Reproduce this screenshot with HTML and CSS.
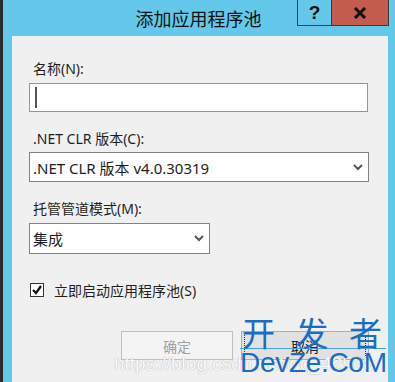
FILE: index.html
```html
<!DOCTYPE html>
<html lang="zh-CN">
<head>
    <meta charset="UTF-8">
    <title>添加应用程序池</title>
    <link rel="stylesheet" href="styles.css">
</head>
<body>
    <div class="window">
        <div class="titlebar">
            <div class="title">添加应用程序池</div>
            <div class="controls">
                <div class="ctl help">?</div>
                <div class="ctl close">
                    <svg width="14" height="12" viewBox="0 0 14 12"><path d="M2 1 L12 11 M12 1 L2 11" stroke="#111" stroke-width="3"/></svg>
                </div>
            </div>
        </div>
        <div class="client">
            <div class="label">名称(N):</div>
            <div class="textbox"><span class="caret"></span></div>

            <div class="label gap">.NET CLR 版本(C):</div>
            <div class="combo wide">
                <span>.NET CLR 版本 v4.0.30319</span>
                <svg class="chev" width="10" height="7" viewBox="0 0 10 7"><path d="M1 1 L5 5 L9 1" fill="none" stroke="#555" stroke-width="2"/></svg>
            </div>

            <div class="label gap">托管管道模式(M):</div>
            <div class="combo short">
                <span>集成</span>
                <svg class="chev" width="10" height="7" viewBox="0 0 10 7"><path d="M1 1 L5 5 L9 1" fill="none" stroke="#555" stroke-width="2"/></svg>
            </div>

            <div class="check-row">
                <div class="checkbox">
                    <svg width="12" height="12" viewBox="0 0 12 12"><path d="M2 6 L5 9 L10 2" fill="none" stroke="#111" stroke-width="2.2"/></svg>
                </div>
                <span>立即启动应用程序池(S)</span>
            </div>

            <div class="buttons">
                <div class="btn disabled">确定</div>
                <div class="btn cancel"><span class="focus">取消</span></div>
            </div>

            <div class="mark-csdn">https://blog.csdn.net/qq_42568</div>
            <div class="mark">
                <div class="mark-cn"><span>开</span><span>发</span><span>者</span></div>
                <div class="mark-en">DevZe.CoM</div>
            </div>
        </div>
    </div>
</body>
</html>
```

FILE: styles.css
```css
body {
    margin: 0;
    font-family: "Noto Sans", "Noto Sans CJK SC", sans-serif;
    color: #1e1e1e;
}

.window {
    width: 395px;
    height: 382px;
    box-sizing: border-box;
    background-color: #64c8ea;
    border-left: 3px solid #2b2b2b;
    padding: 0 7px 0 9px;
    display: flex;
    flex-direction: column;
    overflow: hidden;
}

.titlebar {
    height: 36px;
    display: grid;
    grid-template-columns: 1fr auto 1fr;
    margin-left: -3px;
}

.title {
    grid-column: 2;
    font-family: "Noto Sans CJK SC", sans-serif;
    font-size: 18px;
    line-height: 36px;
    color: #111;
}

.controls {
    grid-column: 3;
    justify-self: end;
    display: flex;
    height: 26px;
    margin-right: -1px;
}

.ctl {
    height: 25px;
    border: 1px solid #3a3a3a;
    border-top: none;
    display: flex;
    align-items: center;
    justify-content: center;
}

.help {
    width: 33px;
    border-right: none;
    font-family: "Liberation Sans", sans-serif;
    font-weight: bold;
    font-size: 19px;
    color: #111;
}

.close {
    width: 56px;
    background-color: #c45c4e;
}

.client {
    flex: 1;
    background-color: #f0f0f0;
    padding: 23px 0 0 17px;
    position: relative;
    font-size: 14px;
}

.label {
    padding-left: 4px;
    line-height: 20px;
    height: 20px;
}

.label.gap {
    margin-top: 17px;
}

.textbox {
    margin-top: 4px;
    width: 332px;
    height: 27px;
    background: #fff;
    border: 1px solid #7a9cc4;
    display: flex;
    align-items: center;
    padding-left: 5px;
}

.caret {
    width: 2px;
    height: 21px;
    background: #555;
}

.combo {
    margin-top: 3px;
    height: 28px;
    background: #fff;
    border: 1px solid #828282;
    display: flex;
    align-items: center;
    justify-content: space-between;
    padding: 0 5px 0 3px;
    font-size: 15px;
}

.combo.wide {
    width: 330px;
}

.combo.short {
    width: 171px;
    height: 29px;
    margin-top: 4px;
}

.check-row {
    margin-top: 27px;
    margin-left: 1px;
    height: 18px;
    display: flex;
    align-items: center;
    gap: 10px;
    font-size: 14px;
}

.checkbox {
    width: 12px;
    height: 12px;
    border: 1px solid #333;
    background: #fff;
    display: flex;
    align-items: center;
    justify-content: center;
}

.buttons {
    margin-top: 32px;
    margin-left: 92px;
    display: flex;
    gap: 8px;
}

.btn {
    width: 110px;
    height: 27px;
    border: 1px solid #adadad;
    display: flex;
    align-items: center;
    justify-content: center;
    font-size: 14px;
}

.btn.disabled {
    background: #f4f4f4;
    border-color: #bfbfbf;
    color: #a0a0a0;
}

.btn.cancel {
    width: 126px;
    background: #e1e1e1;
    color: #222;
}

.btn .focus {
    display: flex;
    align-items: center;
    justify-content: center;
    width: 120px;
    height: 21px;
    border: 1px dotted #333;
    border-top: none;
    border-bottom: none;
}

.mark-csdn {
    position: absolute;
    left: 102px;
    top: 317px;
    font-family: "Liberation Sans", sans-serif;
    font-size: 19px;
    color: #fafafa;
    text-shadow: 0 0 1px #b8b8b8, 0 0 1px #b8b8b8;
    white-space: nowrap;
}

.mark {
    position: absolute;
    left: 228px;
    top: 280px;
    width: 146px;
    color: #1a6cc4;
}

.mark-cn {
    display: flex;
    justify-content: space-between;
    font-family: "Noto Sans CJK SC", sans-serif;
    font-size: 33px;
    line-height: 32px;
    padding: 0 4px 0 2px;
    border-bottom: 1px solid #4a9ee0;
}

.mark-en {
    font-family: "Liberation Sans", sans-serif;
    font-size: 28px;
    line-height: 28px;
    letter-spacing: -0.3px;
    white-space: nowrap;
}
```
